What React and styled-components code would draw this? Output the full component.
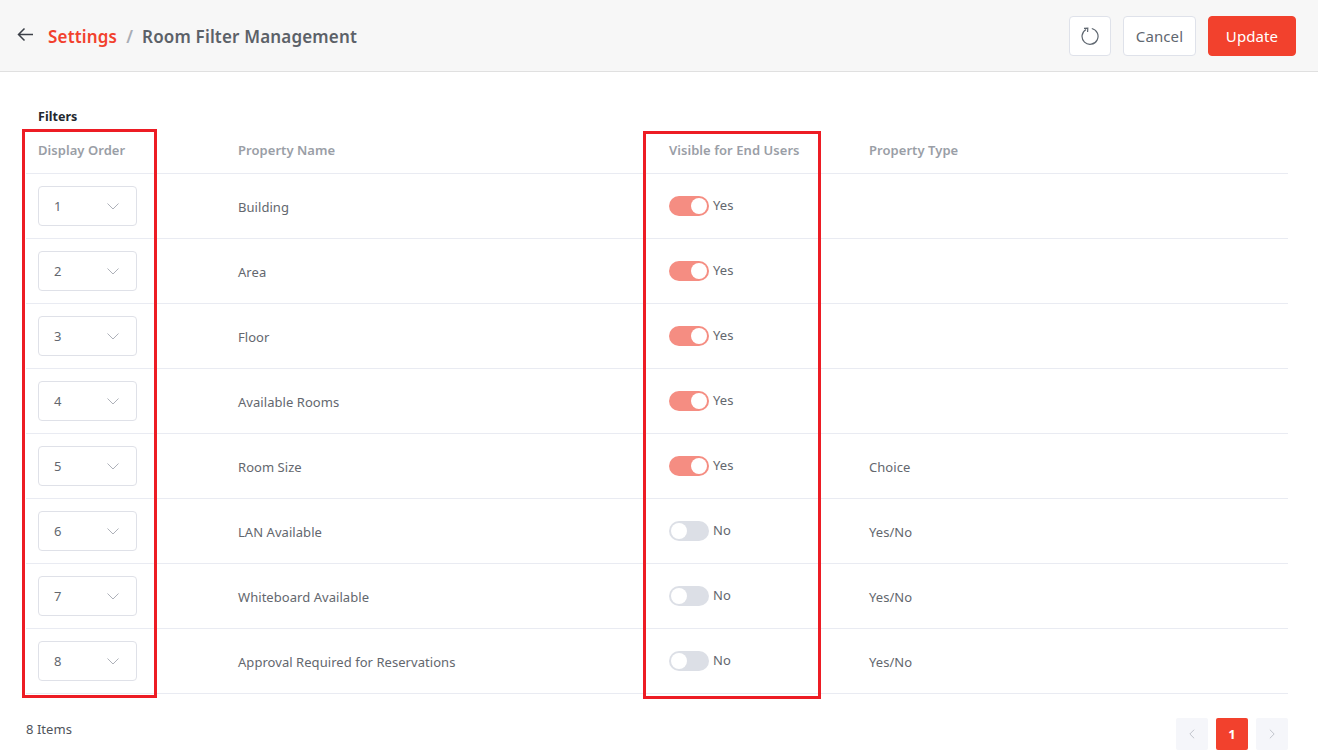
import styled, { createGlobalStyle } from "styled-components";

const GlobalStyle = createGlobalStyle`
  html, body {
    margin: 0;
    padding: 0;
    background: #fff;
    font-family: "Noto Sans", "Open Sans", sans-serif;
    font-size: 13px;
    letter-spacing: 0.05px;
    color: #5f6368;
  }
`;

const Page = styled.div`
  position: relative;
  width: 1318px;
  height: 756px;
  overflow: hidden;
`;

const Header = styled.header`
  display: flex;
  align-items: center;
  height: 71px;
  padding: 0 22px 0 17px;
  background: #f7f7f7;
  border-bottom: 1px solid #e0e0e0;
`;

const BackButton = styled.span`
  display: flex;
  margin-right: 14px;
  margin-top: -2px;
  color: #3c4048;
`;

const Crumbs = styled.div`
  display: flex;
  flex: 1;
  align-items: center;
  padding-top: 2px;
  font-size: 17px;
  font-weight: 600;
  letter-spacing: 0.17px;
`;

const CrumbLink = styled.span`
  color: #f2412d;
`;

const CrumbSep = styled.span`
  margin: 0 9px;
  color: #a9adb5;
`;

const CrumbCurrent = styled.span`
  color: #5c6168;
`;

const Actions = styled.div`
  display: flex;
  gap: 12px;
`;

const Button = styled.button`
  width: ${(p) => p.$width}px;
  height: 40px;
  padding: 0;
  display: flex;
  align-items: center;
  justify-content: center;
  border-radius: 4px;
  font-family: inherit;
  font-size: 15px;
  letter-spacing: 0.1px;
  border: 1px solid ${(p) => (p.$primary ? "#f2412d" : "#dfe2ea")};
  background: ${(p) => (p.$primary ? "#f2412d" : "#fff")};
  color: ${(p) => (p.$primary ? "#fff" : "#5f6770")};
`;

const Content = styled.main`
  padding: 35px 30px 0 26px;
`;

const SectionTitle = styled.div`
  padding-left: 12px;
  height: 20px;
  line-height: 20px;
  font-size: 12.5px;
  font-weight: 700;
  color: #23272e;
`;

const Row = styled.div`
  display: grid;
  grid-template-columns: 200px 431px 200px 1fr;
  align-items: center;
  height: ${(p) => (p.$head ? "46px" : "64px")};
  border-bottom: 1px solid #e9ebf2;
`;

const HeadCell = styled.div`
  padding: 0 12px;
  font-weight: 600;
  color: #9a9ea6;
`;

const Cell = styled.div`
  padding: 2px 12px 0;
  color: #63676e;
`;

const SelectBox = styled.div`
  display: flex;
  align-items: center;
  justify-content: space-between;
  box-sizing: border-box;
  width: 99px;
  height: 40px;
  margin-top: -3px;
  padding: 0 16px 0 15px;
  border: 1px solid #dfe1e8;
  border-radius: 4px;
  background: #fff;
  color: #63676e;
`;

const ChevronSlot = styled.span`
  display: flex;
  color: #aeb1b9;
`;

const ToggleWrap = styled.div`
  display: flex;
  align-items: center;
  gap: 4px;
  margin-top: -3px;
`;

const Track = styled.span`
  display: flex;
  justify-content: ${(p) => (p.$on ? "flex-end" : "flex-start")};
  align-items: center;
  box-sizing: border-box;
  width: 40px;
  height: 20px;
  padding: 2px;
  border-radius: 10px;
  background: ${(p) => (p.$on ? "#f58d82" : "#dcdfe6")};
`;

const Knob = styled.span`
  width: 16px;
  height: 16px;
  border-radius: 50%;
  background: #fff;
`;

const ToggleLabel = styled.span`
  margin-top: -2px;
  color: #63676e;
`;

const Footer = styled.div`
  display: flex;
  align-items: flex-start;
  justify-content: space-between;
  height: 32px;
  margin-top: 24px;
`;

const ItemCount = styled.span`
  line-height: 22px;
  color: #50545b;
`;

const Pager = styled.div`
  display: flex;
  gap: 8px;
`;

const PageButton = styled.span`
  display: flex;
  align-items: center;
  justify-content: center;
  width: 32px;
  height: 32px;
  border-radius: 2px;
  font-weight: 700;
  background: ${(p) => (p.$active ? "#f2412d" : "#f5f6fa")};
  color: ${(p) => (p.$active ? "#fff" : "#b9bcc4")};
`;

const Highlight = styled.div`
  position: absolute;
  box-sizing: border-box;
  left: ${(p) => p.$left}px;
  top: ${(p) => p.$top}px;
  width: ${(p) => p.$width}px;
  height: ${(p) => p.$height}px;
  border: 3px solid #ed1c24;
  pointer-events: none;
`;

const rows = [
  { name: "Building", on: true, type: "" },
  { name: "Area", on: true, type: "" },
  { name: "Floor", on: true, type: "" },
  { name: "Available Rooms", on: true, type: "" },
  { name: "Room Size", on: true, type: "Choice" },
  { name: "LAN Available", on: false, type: "Yes/No" },
  { name: "Whiteboard Available", on: false, type: "Yes/No" },
  { name: "Approval Required for Reservations", on: false, type: "Yes/No" },
];

function Chevron({ dir = "down", size = 14 }) {
  const d = {
    down: "M1.5 4.5 L7 10 L12.5 4.5",
    left: "M9.5 2 L4.5 7 L9.5 12",
    right: "M4.5 2 L9.5 7 L4.5 12",
  }[dir];
  return (
    <svg width={size} height={size} viewBox="0 0 14 14" fill="none" stroke="currentColor" strokeWidth="1">
      <path d={d} />
    </svg>
  );
}

export default function App() {
  return (
    <Page>
      <GlobalStyle />
      <Header>
        <BackButton>
          <svg width="17" height="17" viewBox="0 0 17 17" fill="none" stroke="currentColor" strokeWidth="1.5">
            <path d="M16 8.5 H1.5 M7.5 2.5 L1.5 8.5 L7.5 14.5" />
          </svg>
        </BackButton>
        <Crumbs>
          <CrumbLink>Settings</CrumbLink>
          <CrumbSep>/</CrumbSep>
          <CrumbCurrent>Room Filter Management</CrumbCurrent>
        </Crumbs>
        <Actions>
          <Button $width={42}>
            <svg width="18" height="18" viewBox="0 0 18 18" fill="none" stroke="#5f6770" strokeWidth="1.2">
              <path d="M10.8 1.5 A8 8 0 1 1 5 2.4" />
              <path d="M3 1.4 L6.8 1.2 L6.6 5" />
            </svg>
          </Button>
          <Button $width={73}>Cancel</Button>
          <Button $width={88} $primary>Update</Button>
        </Actions>
      </Header>
      <Content>
        <SectionTitle>Filters</SectionTitle>
        <Row $head>
          <HeadCell>Display Order</HeadCell>
          <HeadCell>Property Name</HeadCell>
          <HeadCell>Visible for End Users</HeadCell>
          <HeadCell>Property Type</HeadCell>
        </Row>
        {rows.map((row, i) => (
          <Row key={row.name}>
            <Cell>
              <SelectBox>
                {i + 1}
                <ChevronSlot>
                  <Chevron />
                </ChevronSlot>
              </SelectBox>
            </Cell>
            <Cell>{row.name}</Cell>
            <Cell>
              <ToggleWrap>
                <Track $on={row.on}>
                  <Knob />
                </Track>
                <ToggleLabel>{row.on ? "Yes" : "No"}</ToggleLabel>
              </ToggleWrap>
            </Cell>
            <Cell>{row.type}</Cell>
          </Row>
        ))}
        <Footer>
          <ItemCount>8 Items</ItemCount>
          <Pager>
            <PageButton><Chevron dir="left" size={12} /></PageButton>
            <PageButton $active>1</PageButton>
            <PageButton><Chevron dir="right" size={12} /></PageButton>
          </Pager>
        </Footer>
      </Content>
      <Highlight $left={22} $top={129} $width={135} $height={569} />
      <Highlight $left={643} $top={131} $width={178} $height={568} />
    </Page>
  );
}
